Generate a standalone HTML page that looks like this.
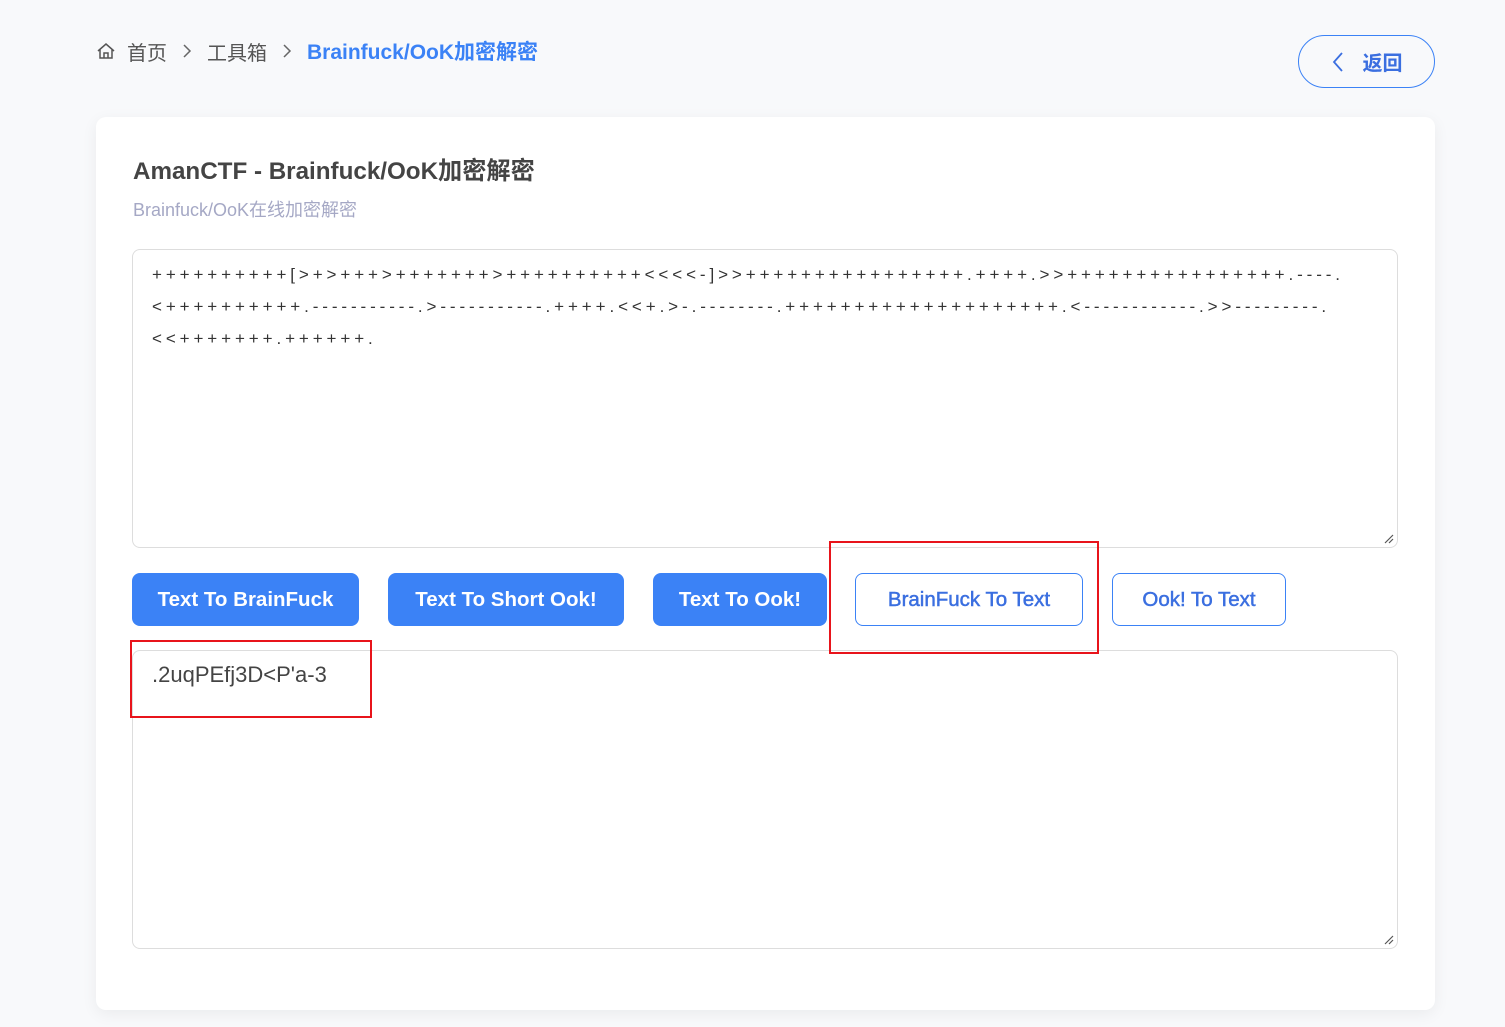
<!DOCTYPE html>
<html><head><meta charset="utf-8"><style>
*{box-sizing:border-box;margin:0;padding:0}
body{width:1505px;height:1027px;background:#f8f9fb;font-family:"Liberation Sans","Noto Sans CJK SC",sans-serif;position:relative;overflow:hidden}
.abs{position:absolute}
.bc{left:96px;top:37px;height:28px;display:flex;align-items:center;font-size:20px;color:#555}
.bc .sep{margin:0 14px;display:flex}
.bc .cur{color:#3b82f6;font-weight:bold;font-size:21px}
.back{left:1298px;top:35px;width:137px;height:53px;border:1px solid #3b82f6;border-radius:27px;display:flex;align-items:center;justify-content:center;color:#3b6fe0;font-size:20px;font-weight:bold}
.card{left:96px;top:117px;width:1339px;height:893px;background:#fff;border-radius:10px;box-shadow:0 4px 16px rgba(0,0,0,0.06)}
.title{left:133px;top:151px;font-size:24.2px;font-weight:bold;color:#444}
.sub{left:133px;top:196px;font-size:18px;color:#a5a8c5}
.ta{left:132px;width:1266px;height:299px;border:1px solid #ddd;border-radius:8px;background:#fff}
.code{left:152px;top:259px;font-size:17px;line-height:32px;letter-spacing:3.9px;color:#333;white-space:pre}
.grip{position:absolute;right:3px;bottom:3px;width:10px;height:10px}
.btn{top:573px;height:53px;border-radius:8px;display:flex;align-items:center;justify-content:center;font-size:20.5px;font-weight:bold}
.fill{background:#3b82f6;color:#fff}
.out{border:1px solid #3b82f6;color:#3b6fe0;background:#fff;font-weight:normal;-webkit-text-stroke:0.5px #3b6fe0}
.red{border:2px solid #e8141b;z-index:5}
</style></head><body>
<div class="abs bc">
<svg width="20" height="20" viewBox="0 0 20 20" style="margin-right:11px"><path d="M2 10 L10 3 L18 10 M4 8.5 V17 H16 V8.5 M8 17 V12 H12 V17" fill="none" stroke="#555" stroke-width="1.5"/></svg>
<span>首页</span><span class="sep"><svg width="12" height="16" viewBox="0 0 12 16"><path d="M3 2 L9 8 L3 14" fill="none" stroke="#666" stroke-width="1.5"/></svg></span><span>工具箱</span><span class="sep"><svg width="12" height="16" viewBox="0 0 12 16"><path d="M3 2 L9 8 L3 14" fill="none" stroke="#666" stroke-width="1.5"/></svg></span><span class="cur">Brainfuck/OoK加密解密</span></div>
<div class="abs back"><svg width="14" height="22" viewBox="0 0 14 22" style="margin-right:18px"><path d="M11 2 L3 11 L11 20" fill="none" stroke="#3b6fe0" stroke-width="1.8"/></svg>返回</div>
<div class="abs card"></div>
<div class="abs title">AmanCTF - Brainfuck/OoK加密解密</div>
<div class="abs sub">Brainfuck/OoK在线加密解密</div>
<div class="abs ta" style="top:249px"><svg class="grip" viewBox="0 0 10 10"><path d="M1 9 L9 1 M5 9 L9 5" stroke="#555" stroke-width="1.2"/></svg></div>
<div class="abs code">++++++++++[&gt;+&gt;+++&gt;+++++++&gt;++++++++++&lt;&lt;&lt;&lt;-]&gt;&gt;++++++++++++++++.++++.&gt;&gt;++++++++++++++++.----.
&lt;++++++++++.-----------.&gt;-----------.++++.&lt;&lt;+.&gt;-.--------.++++++++++++++++++++.&lt;------------.&gt;&gt;---------.
&lt;&lt;+++++++.++++++.</div>
<div class="abs btn fill" style="left:132px;width:227px">Text To BrainFuck</div>
<div class="abs btn fill" style="left:388px;width:236px">Text To Short Ook!</div>
<div class="abs btn fill" style="left:653px;width:174px">Text To Ook!</div>
<div class="abs btn out" style="left:855px;width:228px">BrainFuck To Text</div>
<div class="abs btn out" style="left:1112px;width:174px">Ook! To Text</div>
<div class="abs ta" style="top:650px"><svg class="grip" viewBox="0 0 10 10"><path d="M1 9 L9 1 M5 9 L9 5" stroke="#555" stroke-width="1.2"/></svg></div>
<div class="abs" style="left:152px;top:662px;font-size:22px;color:#444">.2uqPEfj3D&lt;P'a-3</div>
<div class="abs red" style="left:829px;top:541px;width:270px;height:113px"></div>
<div class="abs red" style="left:130px;top:640px;width:242px;height:78px"></div>
</body></html>
